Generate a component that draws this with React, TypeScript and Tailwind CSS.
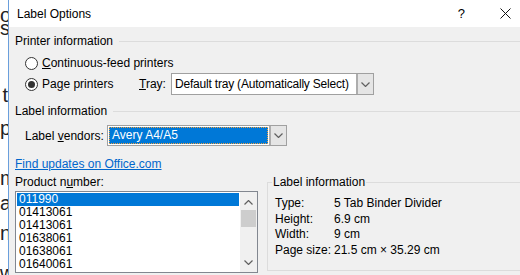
import { ReactNode } from 'react';

const docLines = [
  { text: 'ol', h: 13 },
  { text: 's', h: 67 },
  { text: 't', h: 33 },
  { text: 'p', h: 50 },
  { text: 'm', h: 25 },
  { text: 'a', h: 30 },
  { text: 'ns', h: 40 },
  { text: 'w', h: 20 },
];

const products = ['011990', '01413061', '01413061', '01638061', '01638061', '01640061'];

const details = [
  ['Type:', '5 Tab Binder Divider'],
  ['Height:', '6.9 cm'],
  ['Width:', '9 cm'],
  ['Page size:', '21.5 cm × 35.29 cm'],
];

const Chevron = ({ up = false }: { up?: boolean }) => (
  <svg width="9" height="5" viewBox="0 0 9 5" className={up ? 'rotate-180' : ''}>
    <path d="M0.5 0.5 L4.5 4.5 L8.5 0.5" fill="none" stroke="#606060" strokeWidth="1.2" />
  </svg>
);

const Section = ({ title }: { title: string }) => (
  <div className="flex h-[16px] items-center gap-[6px]">
    <span className="leading-[16px]">{title}</span>
    <div className="h-px flex-1 bg-[#dcdcdc]" />
  </div>
);

const Radio = ({ checked, children }: { checked?: boolean; children: ReactNode }) => (
  <div className="flex items-center gap-[4px]">
    <span className="flex h-[13px] w-[13px] items-center justify-center rounded-full border border-[#333] bg-white">
      {checked && <span className="h-[7px] w-[7px] rounded-full bg-[#333]" />}
    </span>
    <span className="leading-[16px]">{children}</span>
  </div>
);

const DropButton = () => (
  <div className="flex w-[17px] items-center justify-center border-l-2 border-[#adadad] bg-[#e5e5e5]">
    <Chevron />
  </div>
);

const App = () => {
  return (
    <div
      className="flex h-[275px] w-[520px] overflow-hidden bg-white text-[12px] text-black"
      style={{ fontFamily: '"Liberation Sans", Arial, sans-serif' }}
    >
      {/* document behind the dialog */}
      <div className="w-[8px] shrink-0 overflow-hidden pt-[5px] text-right text-[20px] leading-[20px] text-[#222]">
        {docLines.map((line, i) => (
          <div className="whitespace-nowrap" key={i} style={{ height: line.h }}>
            {line.text}
          </div>
        ))}
      </div>
      <div className="w-px shrink-0 bg-[#6a9fdc]" />

      <div className="flex min-w-0 flex-1 flex-col">
        <div className="flex h-[27px] shrink-0 items-center bg-white pl-[8px]">
          <span className="flex-1">Label Options</span>
          <span className="mr-[35px] text-[13px]">?</span>
          <svg width="11" height="11" viewBox="0 0 11 11" className="mr-[9px]">
            <path d="M0.5 0.5 L10.5 10.5 M10.5 0.5 L0.5 10.5" stroke="#111" strokeWidth="1" />
          </svg>
        </div>

        <div className="flex flex-1 flex-col overflow-hidden bg-[#f0f0f0] pl-[6px]">
          <div className="mt-[6px]">
            <Section title="Printer information" />
          </div>
          <div className="mt-[4px] flex h-[20px] items-center pl-[10px]">
            <Radio>
              <u>C</u>ontinuous-feed printers
            </Radio>
          </div>
          <div className="flex h-[22px] items-center pl-[10px]">
            <div className="w-[114px]">
              <Radio checked>
                Pa<u>g</u>e printers
              </Radio>
            </div>
            <span className="w-[32px]">
              <u>T</u>ray:
            </span>
            <div className="flex h-[22px] w-[203px] border border-[#a0a0a0] bg-white">
              <span className="flex-1 pl-[3px] leading-[20px] tracking-[-0.2px]">
                Default tray (Automatically Select)
              </span>
              <DropButton />
            </div>
          </div>

          <div className="mt-[8px]">
            <Section title="Label information" />
          </div>
          <div className="mt-[6px] flex h-[21px] items-center pl-[10px]">
            <span className="w-[82px]">
              Label <u>v</u>endors:
            </span>
            <div className="flex h-[21px] w-[180px] border border-[#a0a0a0] bg-white">
              <div className="m-px flex-1 border border-dotted border-[#f0a040] bg-[#0078d7] pl-[2px] leading-[15px] text-white">
                Avery A4/A5
              </div>
              <DropButton />
            </div>
          </div>

          <a className="mt-[10px] h-[16px] w-fit leading-[16px] text-[#0066cc] underline">Find updates on Office.com</a>

          <div className="mt-[2px] flex">
            <div className="flex w-[252px] shrink-0 flex-col">
              <span className="h-[16px] leading-[16px]">
                Product n<u>u</u>mber:
              </span>
              <div className="mt-px flex h-[82px] w-[243px] border border-[#828790] bg-white">
                <div className="flex flex-1 flex-col p-px">
                  {products.map((p, i) => (
                    <div
                      className={
                        i === 0
                          ? 'h-[13px] bg-[#0078d7] pl-[2px] leading-[13px] text-white'
                          : 'h-[13px] pl-[2px] leading-[13px]'
                      }
                      key={i}
                    >
                      {p}
                    </div>
                  ))}
                </div>
                <div className="flex w-[17px] flex-col items-center bg-[#f0f0f0] pt-[8px] pb-[7px]">
                  <Chevron up />
                  <div className="mt-[5px] h-[17px] w-[15px] bg-[#cdcdcd]" />
                  <div className="flex-1" />
                  <Chevron />
                </div>
              </div>
            </div>
            <div className="mt-[8px] flex h-[89px] w-[270px] shrink-0 flex-col border border-[#dcdcdc]">
              <span className="-mt-[9px] ml-[4px] w-fit bg-[#f0f0f0] px-px leading-[16px]">Label information</span>
              <div className="mt-[5px] flex flex-col pl-[7px]">
                {details.map(([k, v]) => (
                  <div className="flex h-[15.7px] items-center" key={k}>
                    <span className="w-[59px]">{k}</span>
                    <span>{v}</span>
                  </div>
                ))}
              </div>
            </div>
          </div>
        </div>
      </div>
    </div>
  );
};

export default App;
